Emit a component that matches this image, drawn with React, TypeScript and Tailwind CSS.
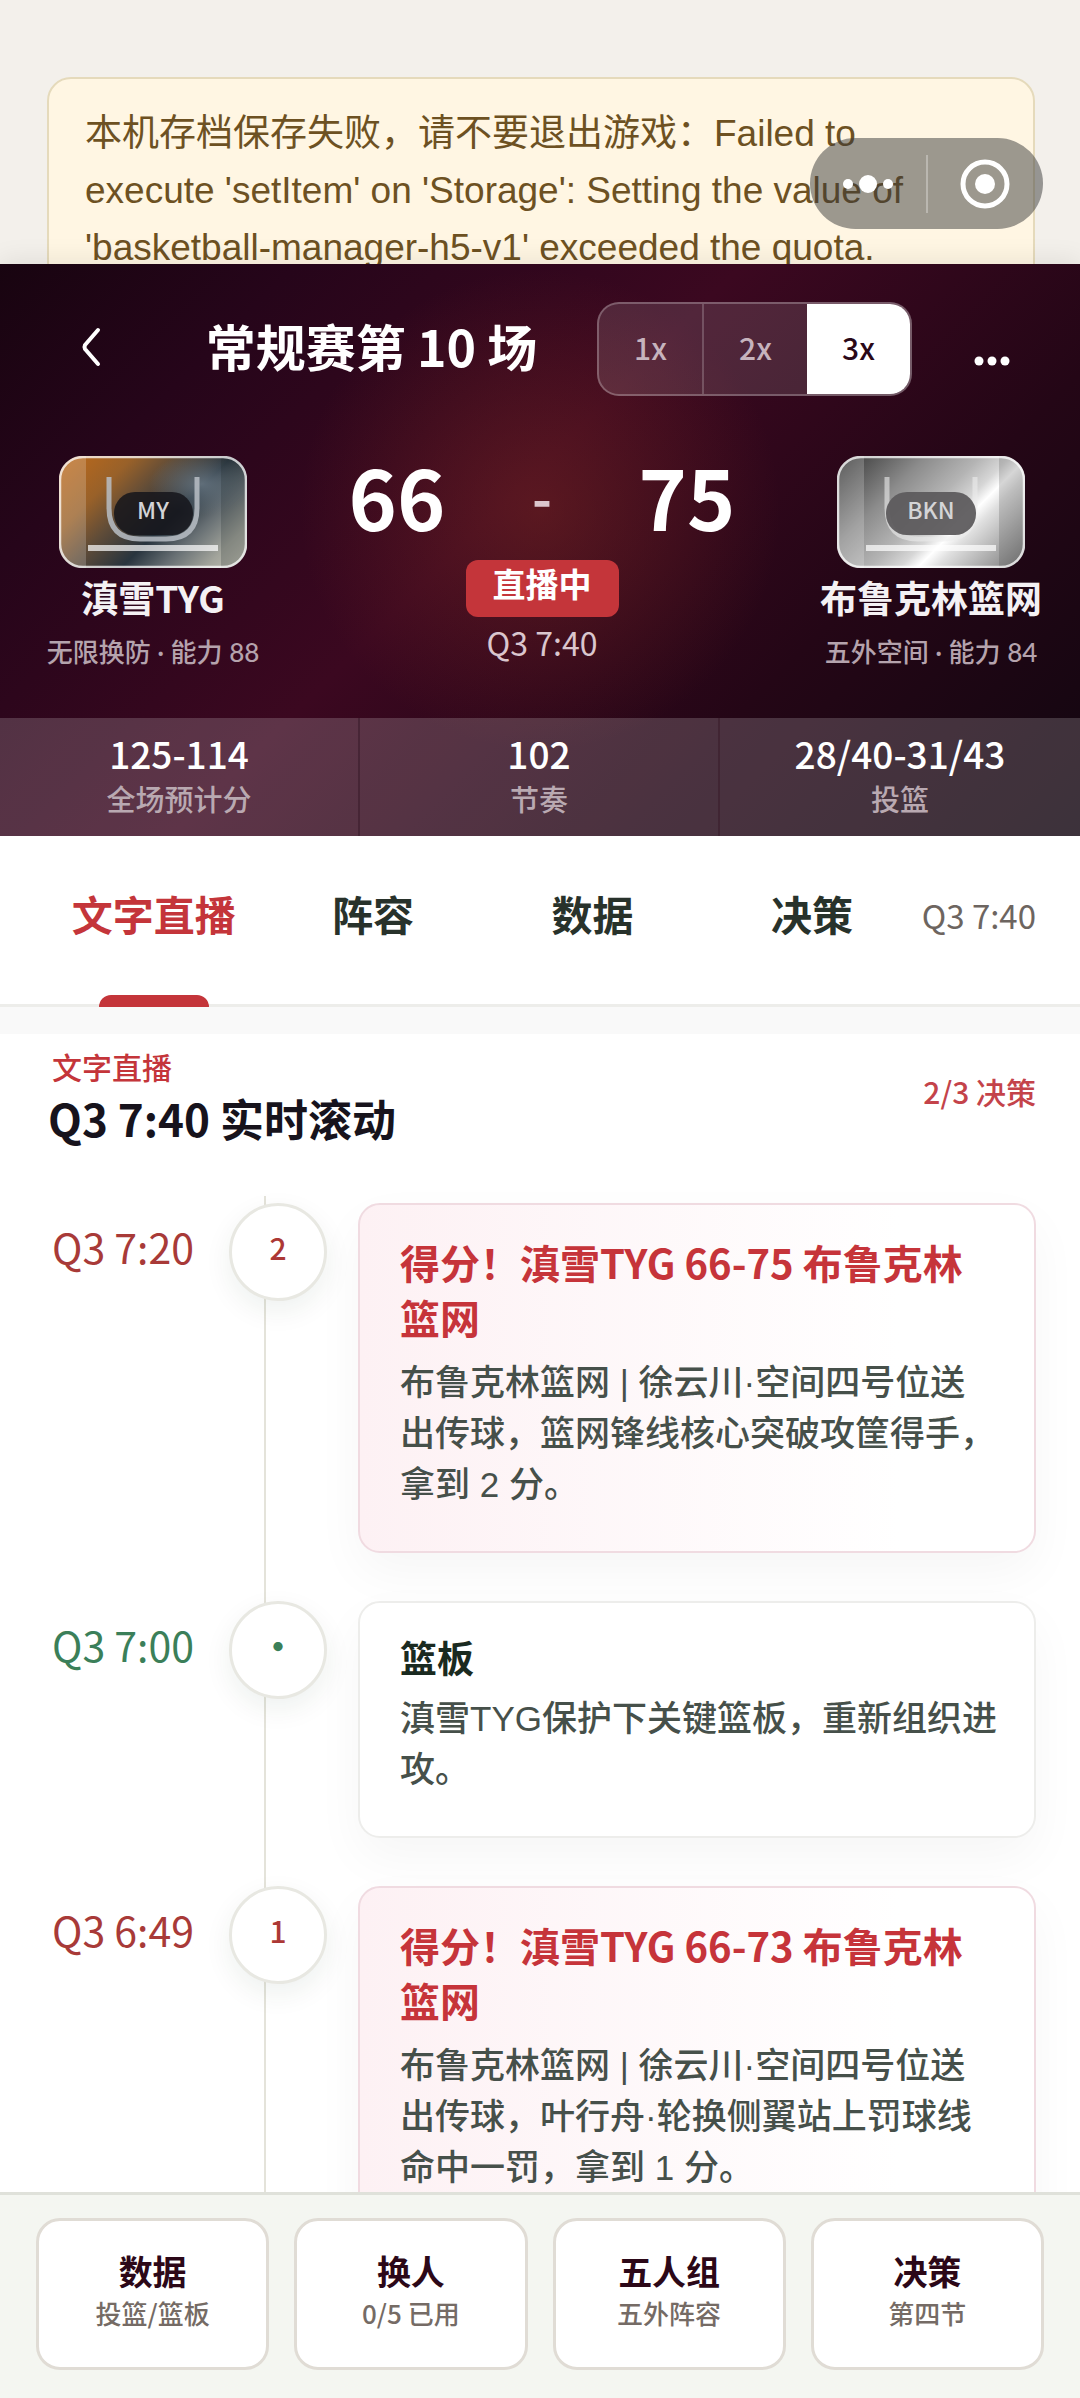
import React from "react";

type Team = { code: string; name: string; note: string; home: boolean };

const home: Team = { code: "MY", name: "滇雪TYG", note: "无限换防 · 能力 88", home: true };
const away: Team = { code: "BKN", name: "布鲁克林篮网", note: "五外空间 · 能力 84", home: false };

const stats = [
  { value: "125-114", label: "全场预计分" },
  { value: "102", label: "节奏" },
  { value: "28/40-31/43", label: "投篮" },
];

const tabs = ["文字直播", "阵容", "数据", "决策"];

const events = [
  {
    time: "Q3 7:20",
    mark: "2",
    score: true,
    title: "得分！滇雪TYG 66-75 布鲁克林篮网",
    body: "布鲁克林篮网 | 徐云川·空间四号位送出传球，篮网锋线核心突破攻筐得手，拿到 2 分。",
  },
  {
    time: "Q3 7:00",
    mark: "·",
    score: false,
    title: "篮板",
    body: "滇雪TYG保护下关键篮板，重新组织进攻。",
  },
  {
    time: "Q3 6:49",
    mark: "1",
    score: true,
    title: "得分！滇雪TYG 66-73 布鲁克林篮网",
    body: "布鲁克林篮网 | 徐云川·空间四号位送出传球，叶行舟·轮换侧翼站上罚球线命中一罚，拿到 1 分。",
  },
];

const actions = [
  { title: "数据", note: "投篮/篮板" },
  { title: "换人", note: "0/5 已用" },
  { title: "五人组", note: "五外阵容" },
  { title: "决策", note: "第四节" },
];

function Capsule() {
  return (
    <div className="absolute top-[138px] right-[37px] z-10 flex h-[91px] w-[233px] items-center rounded-full bg-[#3a3a3a]/50">
      <button aria-label="更多" className="flex h-full flex-1 items-center justify-center">
        <svg width="50" height="20" viewBox="0 0 50 20" fill="#fff">
          <circle cx="5" cy="10" r="5" />
          <circle cx="25" cy="10" r="9" />
          <circle cx="45" cy="10" r="5" />
        </svg>
      </button>
      <span className="h-[58px] w-0.5 bg-white/30" />
      <button aria-label="关闭" className="flex h-full flex-1 items-center justify-center">
        <svg width="50" height="50" viewBox="0 0 50 50" fill="none">
          <circle cx="25" cy="25" r="22" stroke="#fff" strokeWidth="5" />
          <circle cx="25" cy="25" r="10" fill="#fff" />
        </svg>
      </button>
    </div>
  );
}

function Badge({ team }: { team: Team }) {
  const id = team.home ? "home" : "away";
  const pill = team.home ? { x: 55, w: 79 } : { x: 49, w: 90 };
  return (
    <svg width="188" height="112" viewBox="0 0 188 112" role="img" aria-label={team.code}>
      <defs>
        <linearGradient id="home" gradientUnits="userSpaceOnUse" x1="0" y1="0" x2="150" y2="150">
          <stop offset="0.05" stopColor="#b8681c" />
          <stop offset="0.25" stopColor="#996129" />
          <stop offset="0.4" stopColor="#604c38" />
          <stop offset="0.58" stopColor="#28343e" />
          <stop offset="0.72" stopColor="#687074" />
          <stop offset="0.86" stopColor="#a2a49b" />
          <stop offset="1" stopColor="#c4c3b6" />
        </linearGradient>
        <linearGradient id="away" gradientUnits="userSpaceOnUse" x1="0" y1="0" x2="150" y2="150">
          <stop offset="0.05" stopColor="#404040" />
          <stop offset="0.3" stopColor="#8c8c8c" />
          <stop offset="0.48" stopColor="#b4b4b4" />
          <stop offset="0.58" stopColor="#d6d6d6" />
          <stop offset="0.64" stopColor="#ffffff" />
          <stop offset="0.7" stopColor="#e0e0e0" />
          <stop offset="0.82" stopColor="#b4b4b4" />
          <stop offset="1" stopColor="#747474" />
        </linearGradient>
        <radialGradient id="glow" cx="0.76" cy="0.25" r="0.28">
          <stop offset="0" stopColor="#6d7c88" stopOpacity="0.8" />
          <stop offset="1" stopColor="#6d7c88" stopOpacity="0" />
        </radialGradient>
        <clipPath id={id + "Clip"}>
          <rect width="188" height="112" rx="24" />
        </clipPath>
      </defs>
      <g clipPath={`url(#${id}Clip)`}>
        <rect width="188" height="112" fill={`url(#${id})`} />
        {team.home && <rect width="188" height="112" fill="url(#glow)" />}
        <rect width="27" height="112" fill="#fff" opacity="0.2" />
        <rect x="162" width="26" height="112" fill={team.home ? "#1c2424" : "#444"} opacity="0.22" />
        {team.home && <rect x={pill.x} y="36" width={pill.w} height="43" rx="21" fill="#15151b" opacity="0.85" />}
        <path
          d="M50 21V52Q50 83 81 83H107Q138 83 138 52V21"
          fill="none"
          stroke={team.home ? "#b9bec6" : "#ececec"}
          strokeWidth="5"
          opacity={team.home ? 0.85 : 0.6}
        />
        {!team.home && <rect x={pill.x} y="36" width={pill.w} height="43" rx="21" fill="#5c5a5c" opacity="0.94" />}
        <rect x="29" y="89" width="130" height="6" fill="#fff" opacity="0.7" />
      </g>
      <text x="94" y="63" textAnchor="middle" fontSize="23" fontWeight="500" fill="#d4d4d6">
        {team.code}
      </text>
      <rect x="1" y="1" width="186" height="110" rx="23" fill="none" stroke="#fff" strokeOpacity="0.75" strokeWidth="2.5" />
    </svg>
  );
}

function TeamColumn({ team }: { team: Team }) {
  return (
    <div className="flex w-[234px] flex-col items-center whitespace-nowrap">
      <Badge team={team} />
      <h2 className="mt-1 text-[37px] leading-[50px] font-bold text-[#f4f1f4]">{team.name}</h2>
      <p className="mt-3 font-['Lato','Noto_Sans_CJK_SC',sans-serif] text-[26px] leading-9 font-medium text-[#b5a3ad]">{team.note}</p>
    </div>
  );
}

function Scoreboard() {
  return (
    <header className="relative shrink-0 bg-[radial-gradient(circle_at_50%_43%,rgba(140,48,34,0.4),rgba(140,48,34,0)_240px),linear-gradient(135deg,#180410_0%,#26051a_18%,#3b0820_45%,#240616_72%,#120610_100%)] text-white shadow-[0_-4px_24px_rgba(0,0,0,0.08)]">
      <div className="flex h-[132px] items-end pr-2 pl-9">
        <button aria-label="返回" className="flex h-[94px] w-[110px] items-center justify-center pb-1">
          <svg width="20" height="40" viewBox="0 0 20 40" fill="none" stroke="#fff" strokeWidth="4" strokeLinecap="round" strokeLinejoin="round">
            <path d="M17 3L4 18Q3 20 4 22L17 37" />
          </svg>
        </button>
        <h1 className="flex-1 text-center text-[50px] leading-[102px] font-bold whitespace-nowrap">常规赛第 10 场</h1>
        <div className="flex h-[94px] w-[315px] overflow-hidden rounded-[22px] border-2 border-white/25 bg-white/12 text-[30px] font-medium">
          <button className="flex-1 border-r-2 border-white/20 pb-1 text-[#c6b3bd]">1x</button>
          <button className="flex-1 pb-1 text-[#c6b3bd]">2x</button>
          <button aria-pressed="true" className="flex-1 bg-white pb-1 text-[#2a0818]">
            3x
          </button>
        </div>
        <button aria-label="菜单" className="flex h-[94px] w-[160px] items-center justify-center pt-6">
          <svg width="38" height="12" viewBox="0 0 38 12" fill="#fff">
            <circle cx="6" cy="6" r="4.5" />
            <circle cx="19" cy="6" r="4.5" />
            <circle cx="32" cy="6" r="4.5" />
          </svg>
        </button>
      </div>
      <div className="flex justify-between pt-[60px] pr-8 pb-12 pl-9">
        <TeamColumn team={home} />
        <div className="flex flex-col items-center">
          <div className="grid w-[435px] grid-cols-3 items-center text-center text-[82px] leading-20 font-bold">
            <span>66</span>
            <span className="text-[54px] text-[#dcc6cd]">-</span>
            <span>75</span>
          </div>
          <strong className="mt-6 w-[153px] rounded-[12px] bg-[#c4353a] pb-2.5 text-center text-[33px] leading-[47px] font-bold">直播中</strong>
          <time className="mt-1.5 text-[32px] leading-[38px] text-[#dac6ce]">Q3 7:40</time>
        </div>
        <TeamColumn team={away} />
      </div>
      <dl className="grid h-[118px] grid-cols-3 divide-x-2 divide-[#3a1c2c]/60 bg-white/18 text-center">
        {stats.map((s) => (
          <div key={s.label} className="flex flex-col-reverse justify-end pt-3">
            <dt className="text-[29px] leading-[44px] font-medium text-[#b9a9b1]">{s.label}</dt>
            <dd className="text-[37px] leading-[46px] font-medium">{s.value}</dd>
          </div>
        ))}
      </dl>
    </header>
  );
}

function Feed() {
  return (
    <main className="min-h-0 flex-1 overflow-hidden bg-white">
      <div className="flex items-center justify-between pt-2.5 pr-[44px] pl-12">
        <div>
          <p className="pl-1 text-[30px] leading-[44px] font-medium text-[#c4353a]">文字直播</p>
          <h2 className="text-[44px] leading-[60px] font-bold text-[#17131c]">Q3 7:40 实时滚动</h2>
        </div>
        <p className="pb-2.5 text-[30px] leading-10 font-medium text-[#c4434a]">2/3 决策</p>
      </div>
      <div className="relative mt-12 pt-[7px]">
        <span className="absolute top-0 bottom-0 left-[264px] w-0.5 bg-[#e4e3da]" />
        <ol className="flex flex-col gap-12">
          {events.map((e) => (
            <li key={e.time} className="flex items-start pr-[44px]">
              <time
                className={
                  e.score
                    ? "w-[229px] pl-[52px] text-[41px] leading-[86px] whitespace-nowrap text-[#a83a38]"
                    : "w-[229px] pl-[52px] text-[41px] leading-[86px] whitespace-nowrap text-[#3b7f59]"
                }
              >
                {e.time}
              </time>
              <span
                className={
                  e.score
                    ? "relative flex size-[98px] shrink-0 items-center justify-center rounded-full border-3 border-[#e8e8e2] bg-white pb-2.5 text-[30px] font-medium text-[#ac3835] shadow-[0_10px_28px_rgba(20,50,35,0.07)]"
                    : "relative flex size-[98px] shrink-0 items-center justify-center rounded-full border-3 border-[#e8e8e2] bg-white pb-2.5 text-[36px] font-bold text-[#3b7f59] shadow-[0_10px_28px_rgba(20,50,35,0.07)]"
                }
              >
                {e.mark}
              </span>
              <article
                className={
                  e.score
                    ? "relative ml-[31px] flex-1 rounded-[22px] border-2 border-[#f0dbe1] bg-white bg-linear-to-r from-[#fdf1f4] to-white to-80% pt-[30px] pr-9 pb-[41px] pl-10 shadow-[0_20px_50px_rgba(0,0,0,0.04)]"
                    : "relative ml-[31px] flex-1 rounded-[22px] border-2 border-[#ededeb] bg-white pt-[30px] pr-9 pb-[41px] pl-10 shadow-[0_20px_50px_rgba(0,0,0,0.04)]"
                }
              >
                <h3
                  className={
                    e.score
                      ? "text-[40px] leading-[55px] font-bold text-[#c6343a]"
                      : "text-[37px] leading-[48px] font-bold text-[#1a2a20]"
                  }
                >
                  {e.title}
                </h3>
                <p className="mt-3 font-['Liberation_Sans','Noto_Sans_CJK_SC',sans-serif] text-[35px] leading-[51px] font-medium text-[#46504a]">
                  {e.body}
                </p>
              </article>
            </li>
          ))}
        </ol>
      </div>
    </main>
  );
}

export default function App() {
  return (
    <div
      lang="zh-CN"
      className="relative flex h-screen flex-col overflow-hidden bg-[#f3f0eb] font-['Noto_Sans_CJK_SC','Noto_Sans',sans-serif]"
    >
      <div className="h-[264px] shrink-0 overflow-hidden pt-[77px] pr-[45px] pl-[47px]">
        <p
          role="alert"
          className="rounded-[24px] border-2 border-[#e5dabb] bg-[#fff6e3] py-[26px] pr-[46px] pl-[36px] font-['Liberation_Sans','Noto_Sans_CJK_SC',sans-serif] text-[37px] leading-[57px] text-[#6d5122]"
        >
          本机存档保存失败，请不要退出游戏：Failed to execute 'setItem' on 'Storage': Setting the value of 'basketball-manager-h5-v1' exceeded the quota.
        </p>
      </div>
      <Capsule />
      <Scoreboard />
      <nav className="relative flex h-[171px] shrink-0 items-center border-b-3 border-[#ededea] bg-white pr-[44px] pl-[44px]">
        {tabs.map((t, i) => (
          <button
            key={t}
            className={
              i === 0
                ? "relative h-full flex-1 pb-3 text-[41px] font-bold text-[#c4353a]"
                : "h-full flex-1 pb-3 text-[41px] font-bold text-[#28322b]"
            }
          >
            {t}
            {i === 0 && <span className="absolute -bottom-[3px] left-1/2 h-3 w-[110px] -translate-x-1/2 rounded-t-[12px] bg-[#c4353a]" />}
          </button>
        ))}
        <time className="pb-2 text-[33px] whitespace-nowrap text-[#6d6560]">Q3 7:40</time>
      </nav>
      <div className="h-[27px] shrink-0 bg-[#f9f9f9]" />
      <Feed />
      <footer className="grid shrink-0 grid-cols-4 gap-[25px] border-t-3 border-[#dfe1da] bg-[#f4f6f1] px-9 pt-[23px] pb-7">
        {actions.map((a) => (
          <button key={a.title} className="flex h-[152px] flex-col items-center justify-center rounded-[24px] border-3 border-[#e0dcd5] bg-white pb-1.5">
            <strong className="text-[34px] leading-[44px] font-bold text-[#2c0818]">{a.title}</strong>
            <span className="text-[26px] leading-[40px] font-medium text-[#756b65]">{a.note}</span>
          </button>
        ))}
      </footer>
    </div>
  );
}
